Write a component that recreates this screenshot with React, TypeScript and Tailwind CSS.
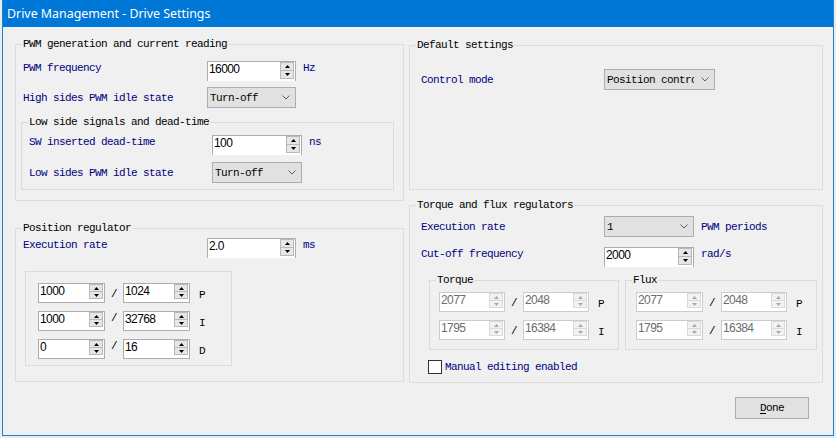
import React from "react";

const mono =
  "font-['Liberation_Mono',monospace] text-[11px] leading-[12px] tracking-[-0.6px] whitespace-nowrap";
const digits =
  "font-['Liberation_Sans',Arial,sans-serif] text-[12px] leading-[14px] tracking-[-0.6px] whitespace-nowrap";
const blue = "text-[#000080]";

const Tri = ({ up, color }: { up?: boolean; color: string }) => (
  <svg width="5" height="3" viewBox="0 0 5 3">
    {up ? <polygon points="2.5,0 5,3 0,3" fill={color} /> : <polygon points="0,0 5,0 2.5,3" fill={color} />}
  </svg>
);

const Spin = ({
  value,
  className,
  disabled,
  big,
}: {
  value: string;
  className: string;
  disabled?: boolean;
  big?: boolean;
}) => (
  <div
    className={`flex h-[20px] shrink-0 items-start bg-white border ${
      disabled ? "border-[#cccccc] text-[#6d6d6d]" : "border-[#adadad] text-black"
    } ${big ? "border-b-0" : ""} ${className}`}
  >
    <span className={`flex-1 pl-[1px] ${digits}`}>{value}</span>
    <div
      className={`mr-[1px] flex w-[14px] flex-col border ${
        disabled ? "border-[#dadada] bg-[#f2f2f2]" : "border-[#b8b8b8] bg-[#e6e6e6]"
      } ${big ? "h-[17px]" : "h-[15px]"}`}
    >
      <div className="flex flex-1 items-center justify-center">
        <Tri up color={disabled ? "#a8a8a8" : "#000"} />
      </div>
      <div className={`flex flex-1 items-center justify-center border-t ${disabled ? "border-[#dadada]" : "border-[#b8b8b8]"}`}>
        <Tri color={disabled ? "#a8a8a8" : "#000"} />
      </div>
    </div>
  </div>
);

const Combo = ({ value, className, textW }: { value: string; className: string; textW?: string }) => (
  <div
    className={`flex h-[21px] shrink-0 items-center border border-[#adadad] bg-[#e1e1e1] pl-[2px] ${className}`}
  >
    <span className={`overflow-hidden text-black ${mono} ${textW ?? ""}`}>{value}</span>
    <svg className="ml-auto mr-[5px]" width="8" height="5" viewBox="0 0 8 5">
      <polyline points="0.5,0.5 4,4 7.5,0.5" fill="none" stroke="#606060" strokeWidth="1" />
    </svg>
  </div>
);

const Group = ({
  title,
  className,
  children,
}: {
  title?: string;
  className: string;
  children?: React.ReactNode;
}) => (
  <div className={`relative border border-[#dcdcdc] ${className}`}>
    {title && (
      <span className={`absolute -top-[7px] left-[6px] bg-[#f0f0f0] px-[1px] text-black ${mono}`}>
        {title}
      </span>
    )}
    {children}
  </div>
);

const Slash = ({ low }: { low?: boolean }) => (
  <span
    className={`flex w-[18px] justify-center text-black ${mono} ${low ? "self-end mb-[3px]" : "self-start mt-[1px]"}`}
  >
    /
  </span>
);

const Ratio = ({
  a,
  b,
  letter,
  disabled,
  low,
  wa,
  wb,
}: {
  a: string;
  b: string;
  letter: string;
  disabled?: boolean;
  low?: boolean;
  wa: string;
  wb: string;
}) => (
  <div className="flex h-[20px] items-center">
    <Spin value={a} className={wa} disabled={disabled} />
    <Slash low={low} />
    <Spin value={b} className={wb} disabled={disabled} />
    <span className={`ml-[9px] mt-[3px] text-black ${mono}`}>{letter}</span>
  </div>
);

export default function App() {
  return (
    <div className="h-[438px] w-[836px] overflow-hidden bg-[#ececec]">
      <div className="ml-[2px] flex h-[436px] w-[832px] flex-col border-x border-b border-[#1883d7] bg-[#f0f0f0]">
        <div className="flex h-[27px] shrink-0 items-center bg-[#0078d7] pl-[4px]">
          <span className="font-['Noto_Sans',sans-serif] text-[12.4px] leading-[14px] text-white">
            Drive Management - Drive Settings
          </span>
        </div>

        <div className="flex pl-[12px]">
          {/* left column */}
          <div className="flex w-[389px] flex-col pt-[17px]">
            <Group title="PWM generation and current reading" className="h-[157px] pt-[16px]">
              <div className="flex items-start pl-[7px]">
                <span className={`mt-[1px] w-[184px] ${blue} ${mono}`}>PWM frequency</span>
                <Spin value="16000" className="w-[89px]" big />
                <span className={`ml-[7px] mt-[1px] ${blue} ${mono}`}>Hz</span>
              </div>
              <div className="mt-[6px] flex items-center pl-[7px]">
                <span className={`w-[184px] ${blue} ${mono}`}>High sides PWM idle state</span>
                <Combo value="Turn-off" className="w-[89px]" />
              </div>
              <Group title="Low side signals and dead-time" className="ml-[5px] mr-[9px] mt-[14px] h-[68px] pt-[12px]">
                <div className="flex items-start pl-[7px]">
                  <span className={`mt-[1px] w-[183px] ${blue} ${mono}`}>SW inserted dead-time</span>
                  <Spin value="100" className="w-[90px]" big />
                  <span className={`ml-[7px] mt-[1px] ${blue} ${mono}`}>ns</span>
                </div>
                <div className="mt-[7px] flex items-center pl-[7px]">
                  <span className={`w-[183px] ${blue} ${mono}`}>Low sides PWM idle state</span>
                  <Combo value="Turn-off" className="w-[90px]" />
                </div>
              </Group>
            </Group>

            <Group title="Position regulator" className="mt-[27px] h-[154px] pt-[9px]">
              <div className="flex items-start pl-[7px]">
                <span className={`mt-[1px] w-[184px] ${blue} ${mono}`}>Execution rate</span>
                <Spin value="2.0" className="w-[89px]" big />
                <span className={`ml-[7px] mt-[1px] ${blue} ${mono}`}>ms</span>
              </div>
              <Group className="ml-[9px] mt-[13px] flex h-[95px] w-[207px] flex-col gap-[8px] pl-[12px] pt-[11px]">
                <Ratio a="1000" b="1024" letter="P" low wa="w-[67px]" wb="w-[67px]" />
                <Ratio a="1000" b="32768" letter="I" wa="w-[67px]" wb="w-[67px]" />
                <Ratio a="0" b="16" letter="D" wa="w-[67px]" wb="w-[67px]" />
              </Group>
            </Group>
          </div>

          {/* right column */}
          <div className="ml-[5px] flex w-[414px] flex-col pt-[18px]">
            <Group title="Default settings" className="h-[145px] pt-[23px]">
              <div className="flex items-center pl-[11px]">
                <span className={`w-[183px] ${blue} ${mono}`}>Control mode</span>
                <Combo value="Position control" className="w-[111px]" textW="w-[87px]" />
              </div>
            </Group>

            <Group title="Torque and flux regulators" className="mt-[15px] h-[178px] pt-[10px]">
              <div className="flex items-center pl-[11px]">
                <span className={`w-[183px] ${blue} ${mono}`}>Execution rate</span>
                <Combo value="1" className="w-[90px] bg-[#dcdcdc]" />
                <span className={`ml-[7px] ${blue} ${mono}`}>PWM periods</span>
              </div>
              <div className="mt-[10px] flex items-start pl-[11px]">
                <span className={`mt-[1px] w-[183px] ${blue} ${mono}`}>Cut-off frequency</span>
                <Spin value="2000" className="w-[90px]" big />
                <span className={`ml-[7px] mt-[1px] ${blue} ${mono}`}>rad/s</span>
              </div>
              <div className="ml-[19px] mt-[13px] flex gap-[6px]">
                <Group title="Torque" className="flex h-[70px] w-[190px] flex-col gap-[8px] pl-[9px] pt-[11px]">
                  <Ratio a="2077" b="2048" letter="P" disabled low wa="w-[66px]" wb="w-[66px]" />
                  <Ratio a="1795" b="16384" letter="I" disabled low wa="w-[66px]" wb="w-[66px]" />
                </Group>
                <Group title="Flux" className="flex h-[70px] w-[192px] flex-col gap-[8px] pl-[10px] pt-[11px]">
                  <Ratio a="2077" b="2048" letter="P" disabled low wa="w-[67px]" wb="w-[66px]" />
                  <Ratio a="1795" b="16384" letter="I" disabled low wa="w-[67px]" wb="w-[66px]" />
                </Group>
              </div>
              <div className="ml-[18px] mt-[10px] flex items-center">
                <div className="h-[14px] w-[14px] border border-[#333333] bg-white" />
                <span className={`ml-[3px] ${blue} ${mono}`}>Manual editing enabled</span>
              </div>
            </Group>
          </div>
        </div>

        <div className="mt-[14px] flex justify-end pr-[24px]">
          <button className={`flex h-[22px] w-[74px] items-center justify-center border border-[#adadad] bg-[#e1e1e1] text-black ${mono}`}>
            <span className="underline underline-offset-2">D</span>one
          </button>
        </div>
      </div>
    </div>
  );
}
